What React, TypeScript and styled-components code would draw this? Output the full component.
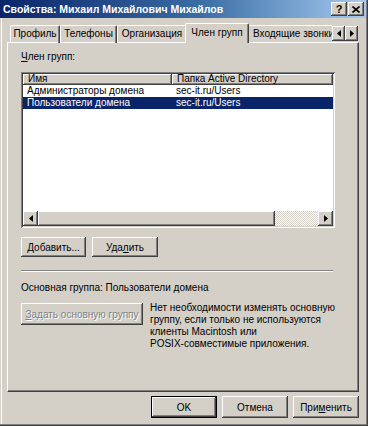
import React from "react";
import styled, { createGlobalStyle, css } from "styled-components";

const GlobalStyle = createGlobalStyle`
  html, body { margin: 0; padding: 0; background: #d4d0c8; }
  body {
    font-family: "Liberation Sans", Arial, sans-serif;
    font-size: 10px;
    color: #000;
  }
  * { box-sizing: border-box; }
`;

const raised = css`
  background: #d4d0c8;
  box-shadow: inset -1px -1px #404040, inset 1px 1px #ffffff,
    inset -2px -2px #808080, inset 2px 2px #d4d0c8;
`;

const Window = styled.div`
  width: 368px;
  height: 426px;
  background: #d4d0c8;
  box-shadow: inset -1px -1px #404040, inset -2px -2px #808080,
    inset 1px 0 #d4d0c8, inset 2px 0 #ffffff;
  display: flex;
  flex-direction: column;
`;

const TitleBar = styled.div`
  height: 18px;
  margin-right: 2px;
  padding: 0 2px 0 3px;
  display: flex;
  align-items: center;
  background: linear-gradient(to right, #0a246a 0%, #3a6ea5 55%, #a6caf0 100%);
`;

const Title = styled.div`
  flex: 1;
  color: #fff;
  font-weight: bold;
  font-size: 10.5px;
  white-space: nowrap;
`;

const TitleButtons = styled.div`
  display: flex;
  gap: 1px;
`;

const TitleButton = styled.div`
  ${raised};
  width: 16px;
  height: 14px;
  display: flex;
  align-items: center;
  justify-content: center;
  font-weight: bold;
  font-size: 11px;
  line-height: 14px;
`;

const TabRow = styled.div`
  margin: 5px 0 0 7px;
  width: 352px;
  height: 19px;
  padding-left: 3px;
  display: flex;
  align-items: flex-end;
  position: relative;
  z-index: 1;
`;

const TabStrip = styled.div`
  flex: 1;
  height: 20px;
  display: flex;
  align-items: flex-end;
  overflow: hidden;
  margin-bottom: -1px;
`;

const Tab = styled.div<{ $active?: boolean; $w?: number }>`
  flex: none;
  width: ${(p) => (p.$w ? `${p.$w}px` : "auto")};
  height: 18px;
  padding: ${(p) => (p.$w ? "0" : "0 4px 0 5px")};
  line-height: 16px;
  text-align: center;
  white-space: nowrap;
  background: #d4d0c8;
  border-top: 1px solid #fff;
  border-left: 1px solid #fff;
  border-right: 1px solid #404040;
  border-top-left-radius: 2px;
  border-top-right-radius: 2px;
  box-shadow: inset -1px 0 #808080, inset 0 -1px #ffffff;
  ${(p) =>
    p.$active &&
    css`
      height: 20px;
      margin: 0 -2px;
      line-height: 18px;
      box-shadow: inset -1px 0 #808080;
      position: relative;
      z-index: 2;
    `}
`;

const TabArrows = styled.div`
  display: flex;
  margin: 0 1px 1px 0;
`;

const ArrowButton = styled.div<{ $w?: number }>`
  ${raised};
  width: ${(p) => p.$w ?? 13}px;
  height: 15px;
  display: flex;
  align-items: center;
  justify-content: center;
`;

const Panel = styled.div`
  margin-left: 7px;
  width: 352px;
  height: 350px;
  background: #d4d0c8;
  border-top: 1px solid #fff;
  border-left: 1px solid #fff;
  border-right: 1px solid #404040;
  border-bottom: 1px solid #404040;
  box-shadow: inset -1px -1px #808080;
  padding: 8px 0 0 13px;
  display: flex;
  flex-direction: column;
`;

const Label = styled.div`
  line-height: 12px;
  height: 12px;
`;

const U = styled.span`
  text-decoration: underline;
  text-underline-offset: 1px;
`;

const ListBox = styled.div`
  margin-top: 9px;
  width: 314px;
  height: 156px;
  background: #fff;
  padding: 2px;
  box-shadow: inset 1px 1px #808080, inset -1px -1px #ffffff,
    inset 2px 2px #404040, inset -2px -2px #d4d0c8;
  display: flex;
  flex-direction: column;
`;

const Grid = styled.div`
  display: grid;
  grid-template-columns: 149px 1fr;
`;

const HeaderRow = styled(Grid)`
  height: 11px;
`;

const HeaderCell = styled.div`
  background: #d4d0c8;
  box-shadow: inset -1px -1px #404040, inset 1px 1px #ffffff,
    inset -2px -2px #808080;
  height: 11px;
  line-height: 10px;
  padding-left: 5px;
  white-space: nowrap;
  overflow: hidden;
`;

const Row = styled(Grid)<{ $selected?: boolean }>`
  height: 12px;
  line-height: 12px;
  background: ${(p) => (p.$selected ? "#0a246a" : "#fff")};
  color: ${(p) => (p.$selected ? "#fff" : "#000")};
`;

const Cell = styled.div`
  padding-left: 4px;
  white-space: nowrap;
`;

const ListFill = styled.div`
  flex: 1;
`;

const HScroll = styled.div`
  height: 15px;
  display: flex;
`;

const Thumb = styled.div`
  ${raised};
  width: 237px;
  height: 15px;
`;

const Track = styled.div`
  flex: 1;
  background-color: #d4d0c8;
  background-image: conic-gradient(#ffffff 25%, #d4d0c8 0 50%, #ffffff 0 75%, #d4d0c8 0);
  background-size: 2px 2px;
`;

const ButtonRow = styled.div<{ $gap: number }>`
  display: flex;
  gap: ${(p) => p.$gap}px;
`;

const Button = styled.div<{ $w: number; $h?: number; $default?: boolean; $disabled?: boolean }>`
  ${raised};
  width: ${(p) => p.$w}px;
  height: ${(p) => p.$h ?? 20}px;
  display: flex;
  align-items: center;
  justify-content: center;
  white-space: nowrap;
  ${(p) =>
    p.$default &&
    css`
      box-shadow: inset 0 0 0 1px #000, inset -2px -2px #404040,
        inset 2px 2px #ffffff, inset -3px -3px #808080;
    `}
  ${(p) =>
    p.$disabled &&
    css`
      color: #808080;
      text-shadow: 1px 1px #ffffff;
    `}
`;

const TopButtons = styled(ButtonRow)`
  margin-top: 9px;
`;

const Separator = styled.div`
  margin-top: 13px;
  width: 312px;
  height: 2px;
  border-top: 1px solid #808080;
  border-bottom: 1px solid #ffffff;
`;

const PrimaryLabel = styled(Label)`
  margin-top: 10px;
`;

const PrimaryRow = styled.div`
  margin-top: 9px;
  display: flex;
  gap: 7px;
  align-items: flex-start;
`;

const Note = styled.div`
  line-height: 12px;
  margin-top: -1px;
`;

const Footer = styled(ButtonRow)`
  margin-top: 4px;
  padding-right: 9px;
  justify-content: flex-end;
`;

const LeftTri = () => (
  <svg width="4" height="7" viewBox="0 0 4 7">
    <path d="M4 0 L0 3.5 L4 7 Z" fill="#000" />
  </svg>
);

const RightTri = () => (
  <svg width="4" height="7" viewBox="0 0 4 7">
    <path d="M0 0 L4 3.5 L0 7 Z" fill="#000" />
  </svg>
);

const CloseGlyph = () => (
  <svg width="8" height="7" viewBox="0 0 8 7">
    <path d="M0.5 0.5 L7.5 6.5 M7.5 0.5 L0.5 6.5" stroke="#000" strokeWidth="1.6" />
  </svg>
);

export default function App() {
  return (
    <>
      <GlobalStyle />
      <Window>
        <TitleBar>
          <Title>Свойства: Михаил Михайлович Михайлов</Title>
          <TitleButtons>
            <TitleButton>?</TitleButton>
            <TitleButton>
              <CloseGlyph />
            </TitleButton>
          </TitleButtons>
        </TitleBar>

        <TabRow>
          <TabStrip>
            <Tab $w={50}>Профиль</Tab>
            <Tab $w={57}>Телефоны</Tab>
            <Tab $w={70}>Организация</Tab>
            <Tab $w={64} $active>
              Член групп
            </Tab>
            <Tab>Входящие звонки</Tab>
          </TabStrip>
          <TabArrows>
            <ArrowButton>
              <LeftTri />
            </ArrowButton>
            <ArrowButton>
              <RightTri />
            </ArrowButton>
          </TabArrows>
        </TabRow>

        <Panel>
          <Label>
            <U>Ч</U>лен групп:
          </Label>
          <ListBox>
            <HeaderRow>
              <HeaderCell>Имя</HeaderCell>
              <HeaderCell>Папка Active Directory</HeaderCell>
            </HeaderRow>
            <Row>
              <Cell>Администраторы домена</Cell>
              <Cell>sec-it.ru/Users</Cell>
            </Row>
            <Row $selected>
              <Cell>Пользователи домена</Cell>
              <Cell>sec-it.ru/Users</Cell>
            </Row>
            <ListFill />
            <HScroll>
              <ArrowButton $w={15}>
                <LeftTri />
              </ArrowButton>
              <Thumb />
              <Track />
              <ArrowButton $w={15}>
                <RightTri />
              </ArrowButton>
            </HScroll>
          </ListBox>

          <TopButtons $gap={6}>
            <Button $w={65}>
              <span>
                <U>Д</U>обавить...
              </span>
            </Button>
            <Button $w={66}>
              <span>
                Уда<U>л</U>ить
              </span>
            </Button>
          </TopButtons>

          <Separator />

          <PrimaryLabel>Основная группа: Пользователи домена</PrimaryLabel>

          <PrimaryRow>
            <Button $w={122} $h={22} $disabled>
              <span>
                <U>З</U>адать основную группу
              </span>
            </Button>
            <Note>
              Нет необходимости изменять основную
              <br />
              группу, если только не используются
              <br />
              клиенты Macintosh или
              <br />
              POSIX-совместимые приложения.
            </Note>
          </PrimaryRow>
        </Panel>

        <Footer $gap={5}>
          <Button $w={66} $h={22} $default>
            OK
          </Button>
          <Button $w={66} $h={22}>
            Отмена
          </Button>
          <Button $w={66} $h={22}>
            <span>
              При<U>м</U>енить
            </span>
          </Button>
        </Footer>
      </Window>
    </>
  );
}
